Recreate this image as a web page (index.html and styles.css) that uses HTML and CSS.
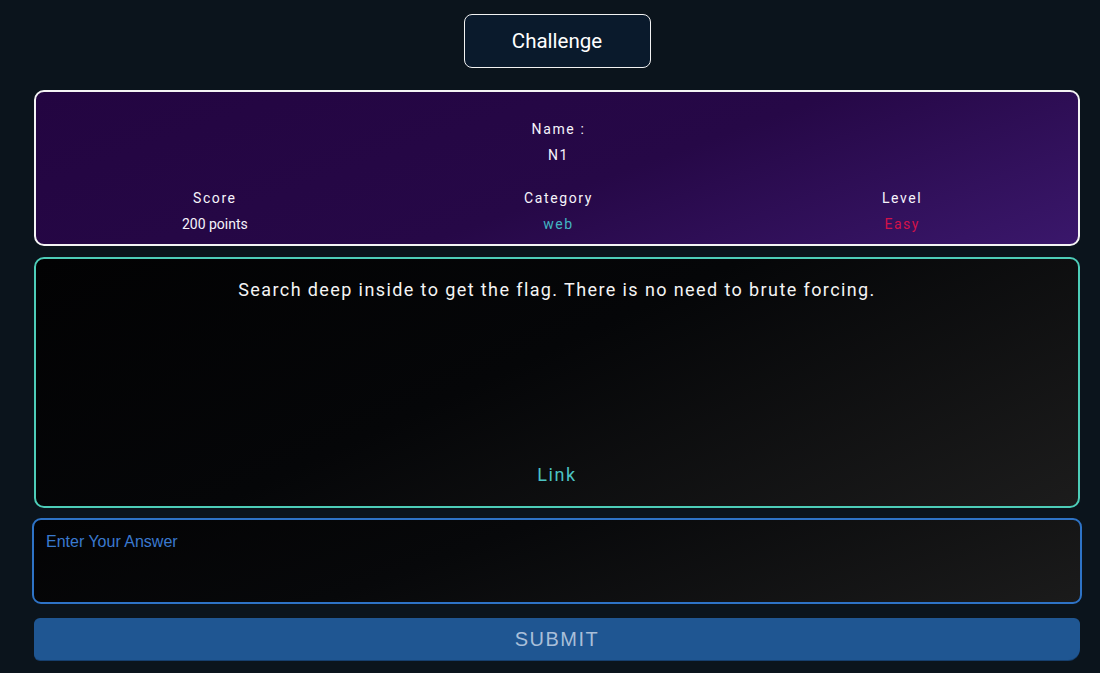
FILE: index.html
```html
<!DOCTYPE html>
<html>
<head>
<meta charset="utf-8">
<link rel="stylesheet" href="styles.css">
</head>
<body>
<main class="page">
  <div class="title-wrap"><div class="title">Challenge</div></div>
  <section class="info">
    <div class="name-block">
      <div class="label">Name :</div>
      <div class="value">N1</div>
    </div>
    <div class="stats">
      <div class="stat"><div class="label">Score</div><div class="value plain">200 points</div></div>
      <div class="stat"><div class="label">Category</div><div class="value teal">web</div></div>
      <div class="stat"><div class="label">Level</div><div class="value red">Easy</div></div>
    </div>
  </section>
  <section class="desc">
    <p class="desc-text">Search deep inside to get the flag. There is no need to brute forcing.</p>
    <a class="link">Link</a>
  </section>
  <div class="answer"><span class="placeholder">Enter Your Answer</span></div>
  <button class="submit">SUBMIT</button>
</main>
</body>
</html>
```
FILE: styles.css
```css
html, body {
  margin: 0;
  padding: 0;
}
body {
  background: #0b141c;
  font-family: Roboto, "Liberation Sans", sans-serif;
  color: #fff;
  width: 1100px;
  height: 673px;
  overflow: hidden;
}
.page {
  display: flex;
  flex-direction: column;
  padding: 14px 20px 0 34px;
  box-sizing: border-box;
  width: 1100px;
}
.title-wrap {
  display: flex;
  justify-content: center;
  margin-bottom: 22px;
}
.title {
  width: 185px;
  height: 52px;
  border: 1.5px solid #f2f2f2;
  border-radius: 8px;
  background: #0a1a2c;
  display: flex;
  align-items: center;
  justify-content: center;
  font-size: 20.5px;
  color: #fff;
}
.info {
  width: 1046px;
  box-sizing: border-box;
  height: 156px;
  border: 2px solid #f4f4f4;
  border-radius: 10px;
  background: linear-gradient(160deg, #230541 0%, #260847 55%, #3a176b 100%);
  padding: 27px 4px 0 7px;
  display: flex;
  flex-direction: column;
}
.label {
  font-size: 14px;
  font-weight: 400;
  letter-spacing: 1.6px;
  color: #f6f4fb;
  line-height: 20px;
}
.value {
  font-size: 14px;
  font-weight: 400;
  letter-spacing: 1.5px;
  line-height: 20px;
  margin-top: 6px;
  color: #f6f4fb;
}
.name-block {
  text-align: center;
}
.stats {
  display: grid;
  grid-template-columns: 1fr 1fr 1fr;
  margin-top: 23px;
  text-align: center;
}
.value.plain {
  letter-spacing: 0;
}
.value.teal {
  color: #42b5c3;
}
.value.red {
  color: #d2124a;
}
.desc {
  margin-top: 11px;
  width: 1046px;
  height: 251px;
  box-sizing: border-box;
  border: 2px solid #4dcdb8;
  border-radius: 10px;
  background: linear-gradient(155deg, #020203 0%, #050608 45%, #1c1c1c 100%);
  display: flex;
  flex-direction: column;
  align-items: center;
  padding: 19px 0 19px;
}
.desc-text {
  margin: 0;
  font-size: 18px;
  letter-spacing: 1.4px;
  line-height: 24px;
  color: #f4f4f4;
}
.link {
  margin-top: auto;
  font-size: 18px;
  letter-spacing: 1.6px;
  line-height: 24px;
  color: #4cc3c3;
}
.answer {
  margin-top: 10px;
  margin-left: -2px;
  width: 1050px;
  height: 86px;
  box-sizing: border-box;
  border: 2px solid #2e73c6;
  border-radius: 9px;
  background: linear-gradient(160deg, #030304 0%, #07080a 40%, #1b1b1b 100%);
  padding: 12px 12px;
}
.placeholder {
  font-family: "Liberation Sans", Arial, sans-serif;
  font-size: 16px;
  color: #3a79cf;
  line-height: 20px;
}
.submit {
  margin-top: 14px;
  width: 1046px;
  height: 42px;
  border: none;
  border-radius: 6px 6px 12px 6px;
  background: #1f5692;
  color: #a9bfd9;
  font-family: "Liberation Sans", Arial, sans-serif;
  font-size: 20px;
  letter-spacing: 1.5px;
  padding: 0;
  box-shadow: 0 1px 0 #163f6e;
}
```
